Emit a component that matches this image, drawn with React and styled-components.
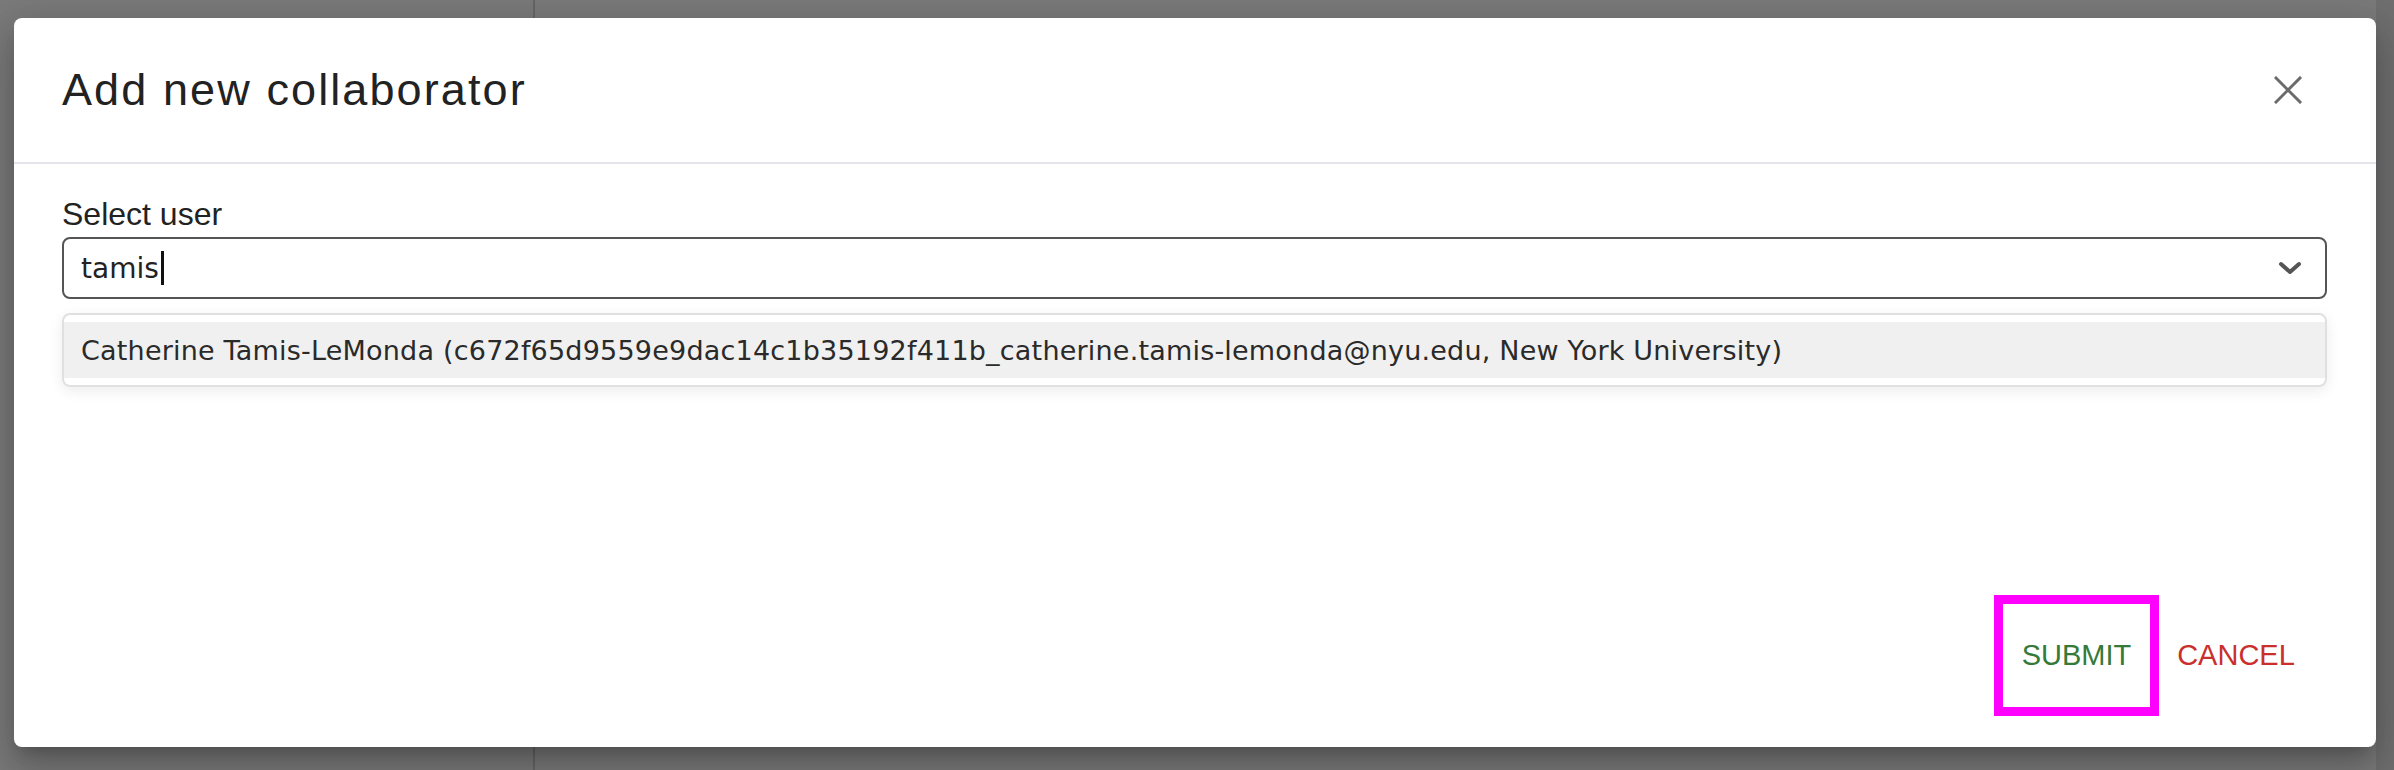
import React from "react";
import styled, { createGlobalStyle } from "styled-components";

const GlobalStyle = createGlobalStyle`
  html, body {
    margin: 0;
    padding: 0;
  }
  #root {
    height: 770px;
  }
`;

const Page = styled.div`
  position: relative;
  display: flex;
  height: 770px;
  background: #f4f4f4;
  overflow: hidden;
`;

const Sidebar = styled.div`
  width: 533px;
  border-right: 2px solid #cccccc;
`;

const Content = styled.div`
  flex: 1;
`;

const Scrollbar = styled.div`
  width: 18px;
  background: #dedede;
`;

const Backdrop = styled.div`
  position: absolute;
  inset: 0;
  display: flex;
  padding: 18px 18px 23px 14px;
  background: rgba(0, 0, 0, 0.5);
`;

const Dialog = styled.div`
  flex: 1;
  display: flex;
  flex-direction: column;
  background: #ffffff;
  border-radius: 8px;
  box-shadow: 0 11px 15px -7px rgba(0, 0, 0, 0.2),
    0 24px 38px 3px rgba(0, 0, 0, 0.14), 0 9px 46px 8px rgba(0, 0, 0, 0.12);
`;

const Header = styled.div`
  height: 144px;
  display: flex;
  align-items: center;
  justify-content: space-between;
  padding: 0 64px 0 48px;
  border-bottom: 2px solid #e4e4ea;
`;

const Title = styled.h2`
  margin: 0;
  font-family: "Liberation Sans", Arial, sans-serif;
  font-weight: 400;
  font-size: 45px;
  letter-spacing: 2.1px;
  color: #222222;
`;

const CloseButton = styled.button`
  width: 48px;
  height: 48px;
  display: flex;
  align-items: center;
  justify-content: center;
  padding: 0;
  border: none;
  background: transparent;
  color: #6b6b6b;
`;

const Body = styled.div`
  flex: 1;
  display: flex;
  flex-direction: column;
  padding: 32px 49px 0 48px;
`;

const Label = styled.label`
  font-family: "Liberation Sans", Arial, sans-serif;
  font-size: 32px;
  line-height: 36px;
  color: #222222;
  margin-bottom: 5px;
`;

const SelectBox = styled.div`
  height: 62px;
  box-sizing: border-box;
  display: flex;
  align-items: center;
  padding: 0 23px 0 17px;
  border: 2px solid #555555;
  border-radius: 8px;
`;

const InputText = styled.div`
  flex: 1;
  display: flex;
  align-items: center;
  font-family: "DejaVu Sans", Verdana, sans-serif;
  font-size: 28px;
  color: #222222;
`;

const Caret = styled.span`
  display: inline-block;
  width: 3px;
  height: 34px;
  margin-left: 2px;
  background: #111111;
`;

const Menu = styled.div`
  margin-top: 14px;
  padding: 7px 0;
  border: 2px solid #e0e0e0;
  border-radius: 8px;
  box-shadow: 0 4px 14px rgba(0, 0, 0, 0.08);
`;

const Option = styled.div`
  height: 56px;
  display: flex;
  align-items: center;
  padding: 0 17px;
  background: ${(p) => (p.$active ? "#f0f0f0" : "transparent")};
  font-family: "DejaVu Sans", Verdana, sans-serif;
  font-size: 27px;
  letter-spacing: 0.2px;
  color: #2a2a2a;
  white-space: nowrap;
`;

const Footer = styled.div`
  display: flex;
  justify-content: flex-end;
  align-items: center;
  gap: 10px;
  padding: 0 64px 40px 0;
`;

const TextButton = styled.button`
  width: ${(p) => p.$width}px;
  height: 103px;
  padding: 0;
  border: none;
  background: transparent;
  font-family: "Liberation Sans", Arial, sans-serif;
  font-size: 29px;
  text-transform: uppercase;
  color: ${(p) => p.$color};
  outline: ${(p) => (p.$highlight ? "9px solid #ff00ff" : "none")};
`;

const CloseIcon = () => (
  <svg width="28" height="28" viewBox="0 0 28 28">
    <path
      d="M2 2 L26 26 M26 2 L2 26"
      stroke="currentColor"
      strokeWidth="3"
      strokeLinecap="square"
      fill="none"
    />
  </svg>
);

const Chevron = () => (
  <svg width="24" height="14" viewBox="0 0 24 14">
    <polyline
      points="3,3 12,11 21,3"
      stroke="#555555"
      strokeWidth="4"
      strokeLinecap="round"
      strokeLinejoin="round"
      fill="none"
    />
  </svg>
);

export default function App() {
  return (
    <>
      <GlobalStyle />
      <Page>
        <Sidebar />
        <Content />
        <Scrollbar />
        <Backdrop>
          <Dialog>
            <Header>
              <Title>Add new collaborator</Title>
              <CloseButton aria-label="close">
                <CloseIcon />
              </CloseButton>
            </Header>
            <Body>
              <Label>Select user</Label>
              <SelectBox>
                <InputText>
                  tamis
                  <Caret />
                </InputText>
                <Chevron />
              </SelectBox>
              <Menu>
                <Option $active>
                  Catherine Tamis-LeMonda
                  (c672f65d9559e9dac14c1b35192f411b_catherine.tamis-lemonda@nyu.edu,
                  New York University)
                </Option>
              </Menu>
            </Body>
            <Footer>
              <TextButton $width={147} $color="#357a38" $highlight>
                Submit
              </TextButton>
              <TextButton $width={152} $color="#c9302c">
                Cancel
              </TextButton>
            </Footer>
          </Dialog>
        </Backdrop>
      </Page>
    </>
  );
}
